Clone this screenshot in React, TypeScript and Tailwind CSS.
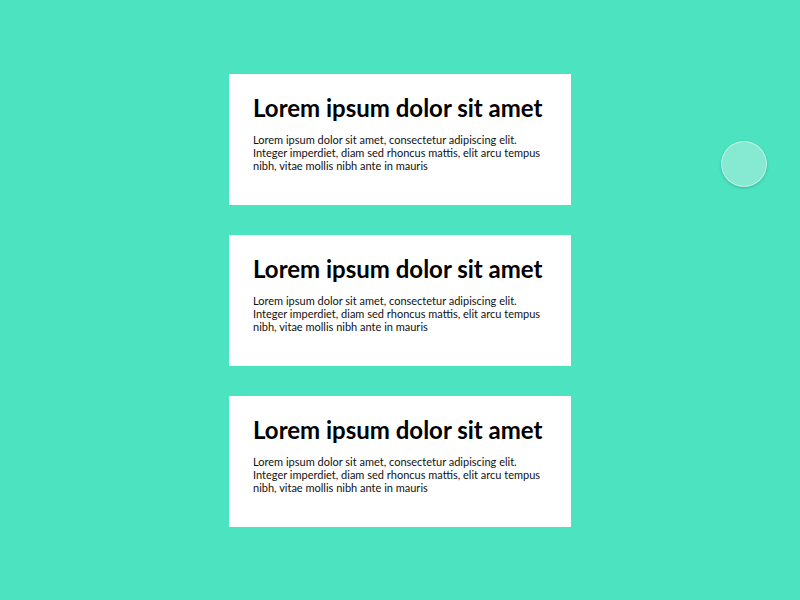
export default function App() {
  const cards = [0, 1, 2]
  return (
    <div className="relative h-[600px] w-[800px] bg-[#4be3c0] flex flex-col items-center justify-center gap-[30px] font-['Lato',sans-serif] overflow-hidden">
      {cards.map((i) => (
        <div key={i} className="w-[342px] h-[131px] bg-white px-6 pt-[20px]">
          <h2 className="text-[24px] leading-[28px] font-bold text-black whitespace-nowrap">Lorem ipsum dolor sit amet</h2>
          <p className="mt-[11px] text-[11px] leading-[13px] text-[#111]">
            Lorem ipsum dolor sit amet, consectetur adipiscing elit. Integer imperdiet, diam sed rhoncus mattis, elit arcu tempus nibh, vitae mollis nibh ante in mauris
          </p>
        </div>
      ))}
      {/* floating circle */}
      <div className="absolute left-[721px] top-[141px] w-[46px] h-[46px] rounded-full bg-[#86ead3] border border-white/50 shadow-[0_1px_3px_rgba(0,0,0,0.2)]" />
    </div>
  )
}
